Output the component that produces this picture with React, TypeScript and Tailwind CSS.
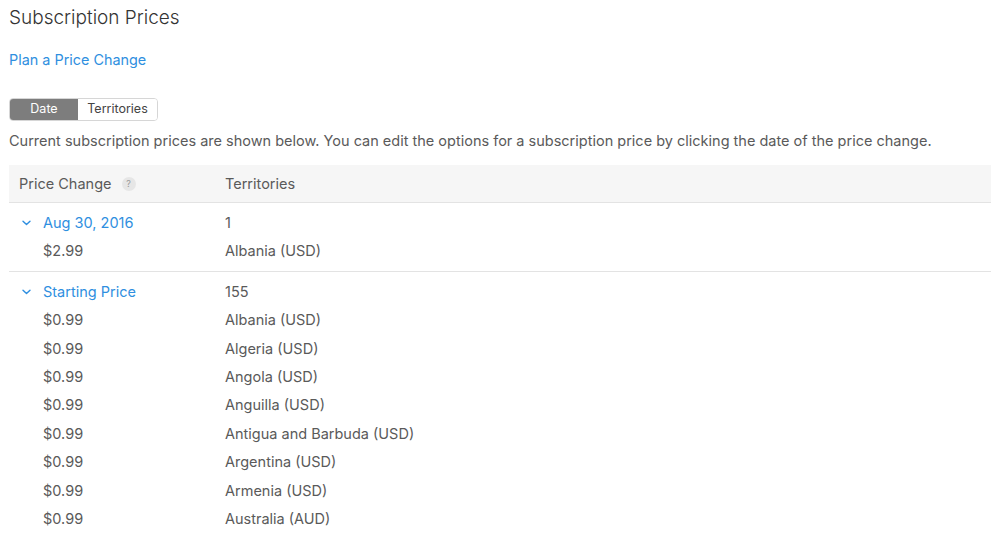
import React from 'react';

type Group = {
  label: string;
  count: string;
  rows: { price: string; territory: string }[];
};

const groups: Group[] = [
  {
    label: 'Aug 30, 2016',
    count: '1',
    rows: [{ price: '$2.99', territory: 'Albania (USD)' }],
  },
  {
    label: 'Starting Price',
    count: '155',
    rows: [
      { price: '$0.99', territory: 'Albania (USD)' },
      { price: '$0.99', territory: 'Algeria (USD)' },
      { price: '$0.99', territory: 'Angola (USD)' },
      { price: '$0.99', territory: 'Anguilla (USD)' },
      { price: '$0.99', territory: 'Antigua and Barbuda (USD)' },
      { price: '$0.99', territory: 'Argentina (USD)' },
      { price: '$0.99', territory: 'Armenia (USD)' },
      { price: '$0.99', territory: 'Australia (AUD)' },
    ],
  },
];

function Chevron() {
  return (
    <svg width="9" height="6" viewBox="0 0 9 6" className="mr-[12px] ml-[13px]">
      <path d="M1 1.2 L4.5 4.6 L8 1.2" fill="none" stroke="#2f8fe0" strokeWidth="1.4" strokeLinecap="round" strokeLinejoin="round" />
    </svg>
  );
}

export default function App() {
  return (
    <div className="w-[1000px] h-[535px] overflow-hidden bg-white px-[9px] text-[#5a5a5a] font-['Inter','Liberation_Sans',sans-serif]">
      <h1 className="pt-[4px] text-[19px] leading-[28px] font-light text-[#333]">Subscription Prices</h1>

      <a className="block mt-[17px] text-[14.4px] leading-[22px] text-[#2f8fe0]">Plan a Price Change</a>

      <div className="mt-[27px] flex h-[23px] w-[149px] text-[12.5px] rounded-[4px] overflow-hidden border border-[#d6d6d6]">
        <div className="w-[68px] flex items-center justify-center bg-[#7d7d7d] text-white">Date</div>
        <div className="flex-1 flex items-center justify-center bg-white text-[#444]">Territories</div>
      </div>

      <p className="mt-[9px] text-[14.5px] leading-[22px]">
        Current subscription prices are shown below. You can edit the options for a subscription price by clicking the date of the price change.
      </p>

      <div className="mt-[13px] w-[982px]">
        <div className="flex h-[38px] items-center bg-[#f6f6f6] border-b border-[#e3e3e3] text-[14.5px]">
          <div className="w-[216px] pl-[10px] flex items-center">
            Price Change
            <span className="ml-[10px] w-[14px] h-[14px] rounded-full bg-[#e6e6e6] text-[#999] text-[9px] leading-[14px] text-center">?</span>
          </div>
          <div>Territories</div>
        </div>

        {groups.map((g, gi) => (
          <div key={g.label} className={`pt-[6px] pb-[5px] text-[14.5px] leading-[28.4px] ${gi < groups.length - 1 ? 'border-b border-[#e3e3e3]' : ''}`}>
            <div className="flex">
              <div className="w-[216px] flex items-center text-[#2f8fe0]">
                <Chevron />
                {g.label}
              </div>
              <div>{g.count}</div>
            </div>
            {g.rows.map((r, i) => (
              <div key={i} className="flex">
                <div className="w-[216px] pl-[34px]">{r.price}</div>
                <div>{r.territory}</div>
              </div>
            ))}
          </div>
        ))}
      </div>
    </div>
  );
}
